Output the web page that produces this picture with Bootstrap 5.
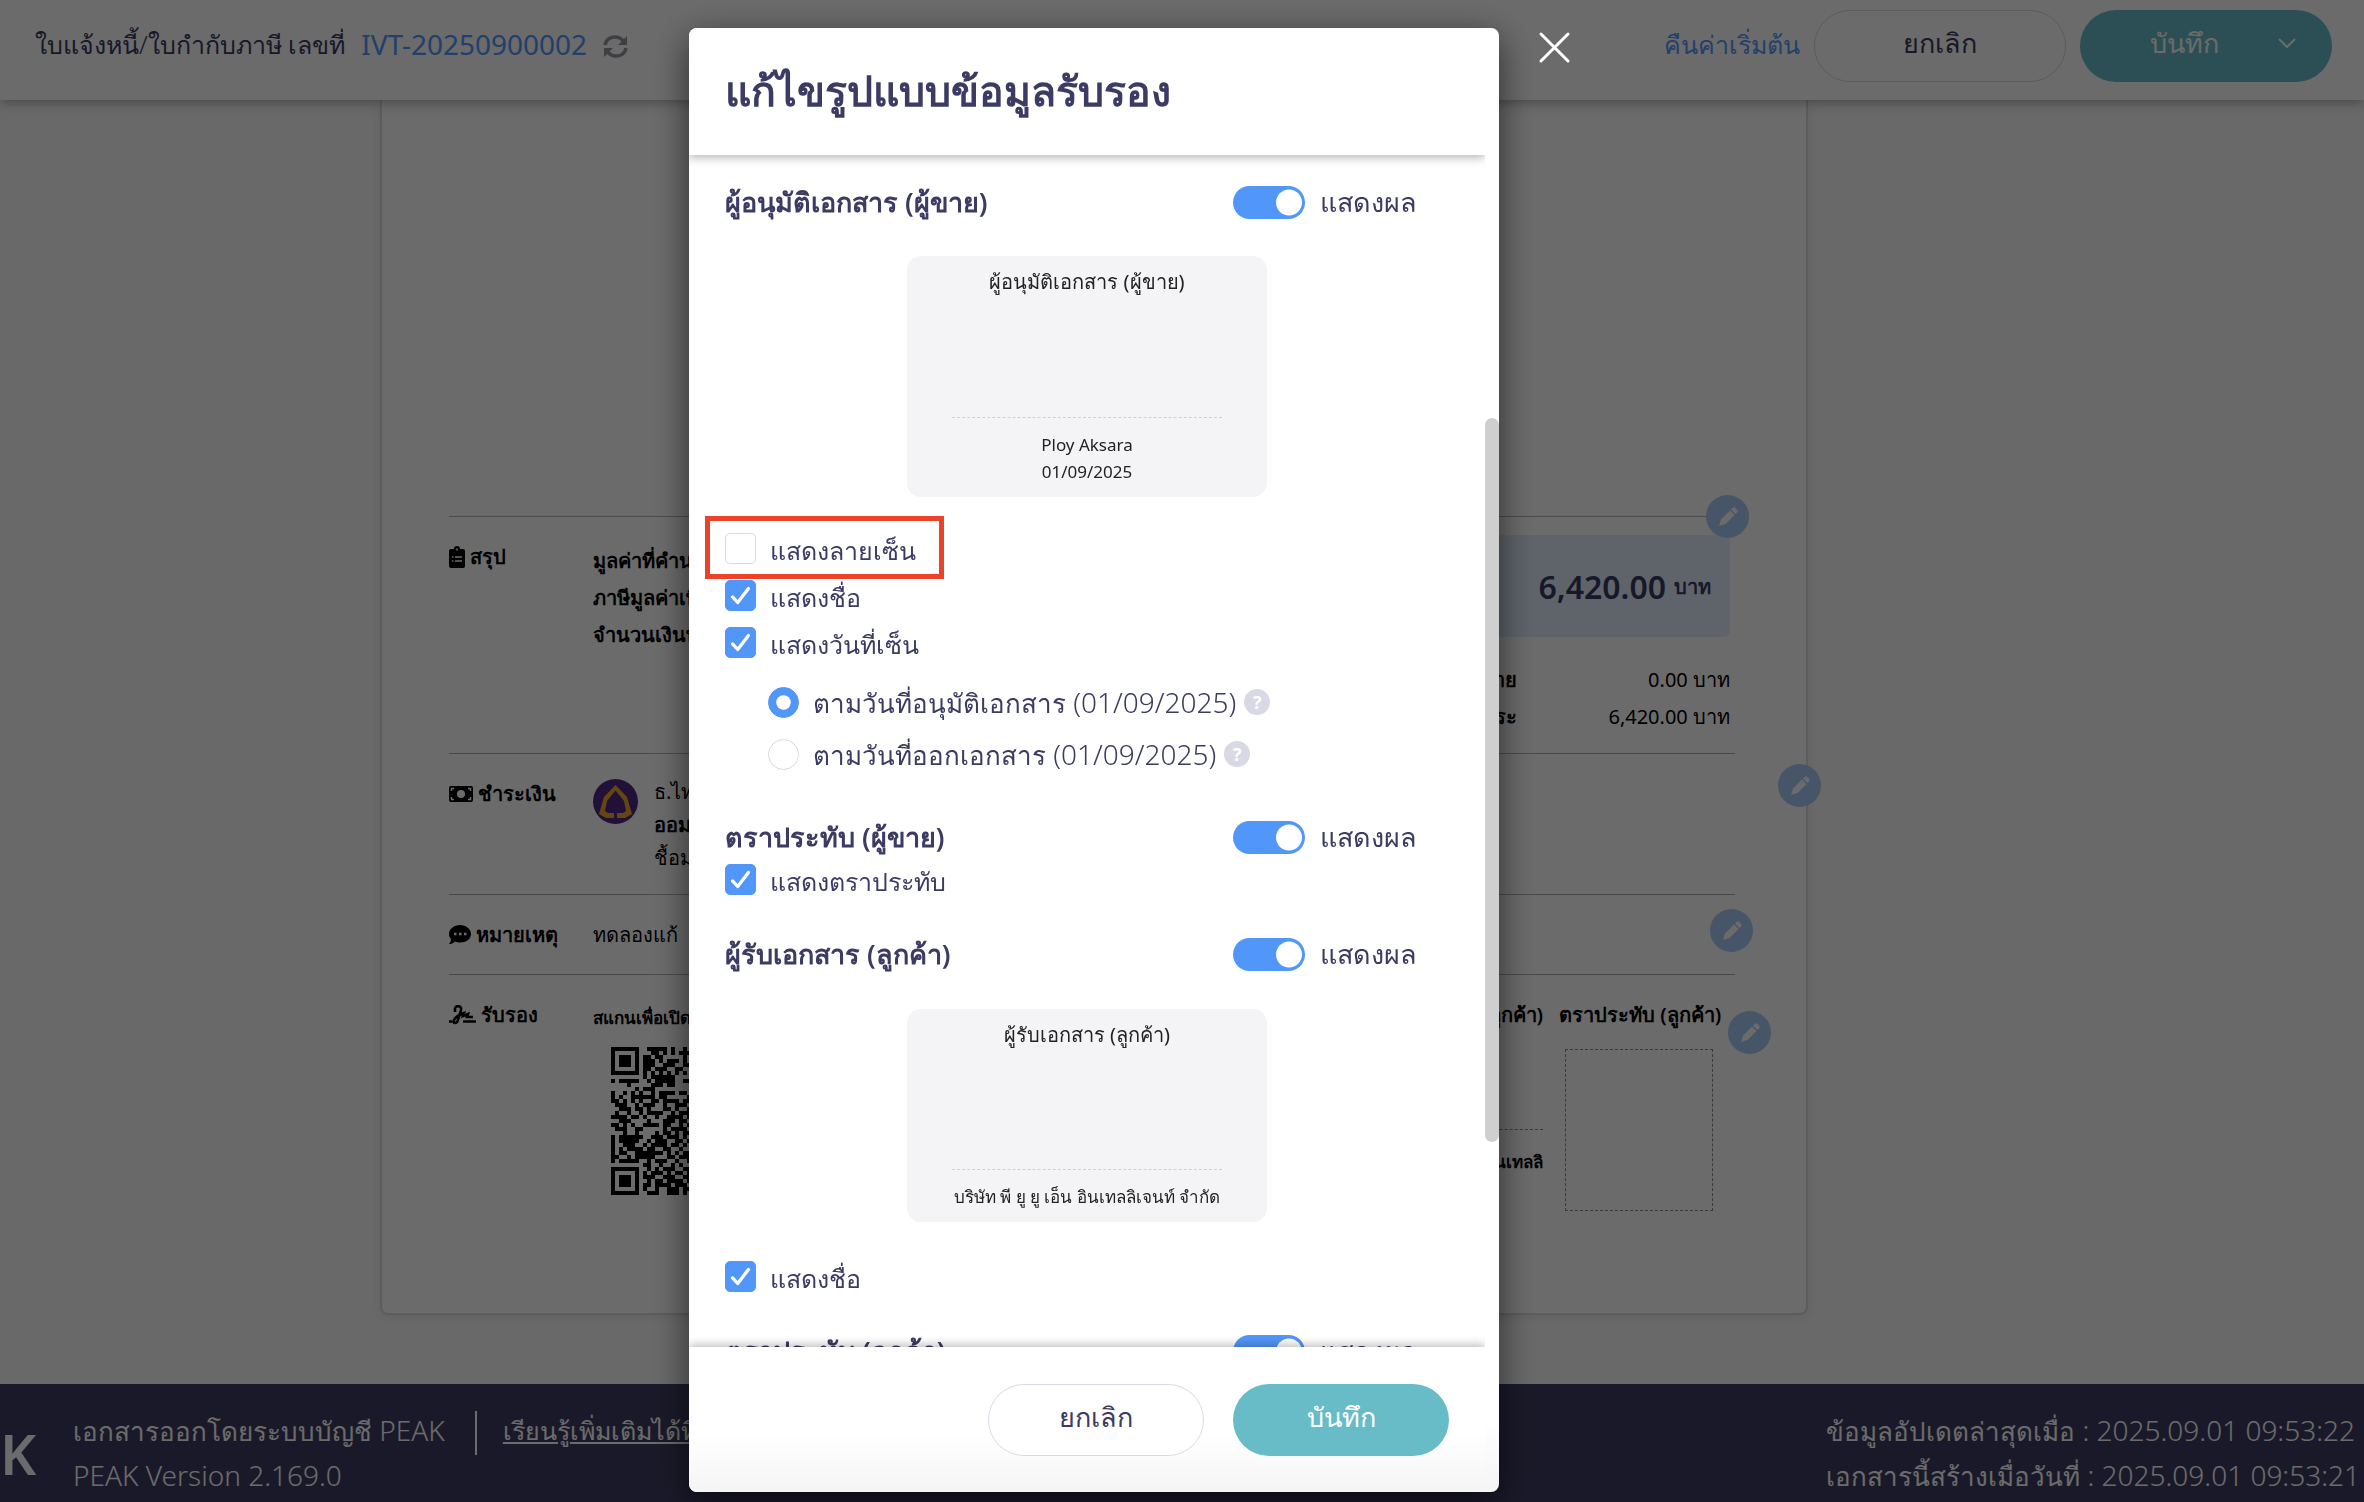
<!DOCTYPE html>
<html lang="th">
<head>
<meta charset="utf-8">
<meta name="viewport" content="width=device-width, initial-scale=1">
<title>PEAK</title>
<link href="https://cdn.jsdelivr.net/npm/bootstrap@5.3.0/dist/css/bootstrap.min.css" rel="stylesheet">
<style>
:root{--ink:#3b3b63;--blue:#5196f9;--teal:#67bcc8;--line:#d9d9e6}
body{font-family:"Noto Sans","Open Sans",sans-serif;font-size:28px;line-height:44px;color:var(--ink);background:#fafafa;height:100vh;overflow:hidden}
a{color:#5199fb;text-decoration:none}
.th{font-size:25px}
.th-l{font-size:26px}
.topbar{height:100px;padding:0 32px 8px 35px;background:#fff;box-shadow:0 2px 12px rgba(0,0,0,.35);position:relative;z-index:2;font-weight:300}
.topbar a{font-weight:400}
.top-actions{gap:14px}
.pill{height:72px;border-radius:36px;font-size:27px;font-weight:300;line-height:44px;padding:0 0 6px}
.pill-line,.pill-line:hover{border:1px solid var(--line);color:var(--ink);background:#fff}
.pill-teal,.pill-teal:hover{background:var(--teal);color:#fff;border:0}
.wide{width:252px}
.mid{width:216px}
.save-main{padding-left:10px}
.save-more{margin-right:36px}
.paper{margin-left:380px;width:1428px;padding:416px 71px 0 67px;background:#fff;border:2px solid #dcdcdc;border-top:0;border-radius:0 0 8px 8px;box-shadow:0 2px 12px rgba(0,0,0,.08);height:1215px;color:#000;font-size:20px;line-height:37px}
.band{border-top:1px solid #b4b4b4;position:relative;padding-top:21px}
.band b,.band-name{font-weight:600}
.band-name{width:144px;gap:5px;height:37px;white-space:nowrap}
.b1{height:237px}
.b2{height:141px}
.b3{height:80px}
.b4{height:300px}
.totals{margin:-3px 5px 0 auto;width:500px}
.total-box{height:102px;background:#e2eeff;border-radius:6px;padding-right:19px;color:var(--ink);font-weight:600}
.amount{font-size:32px}
.sums{margin-top:24px}
.sum-names{width:287px}
.bank-logo{margin-top:4px}
.bank-lines{line-height:33px}
.edit-dot{position:absolute;width:43px;height:43px;border-radius:50%;border:0;padding:0;background:#a9cbfa;display:flex;align-items:center;justify-content:center}
.e1{right:-14px;top:-22px}.e2{right:-86px;top:10px}.e3{right:-18px;top:14px}.e4{right:-36px;top:36px}
.scan{font-size:17px;padding-top:3px}
.scan svg{margin:11px 0 0 18px}
.sign-col{width:200px;text-align:right}
.sign-name{font-size:17px;white-space:nowrap}
.stamp-col{width:160px}
.stamp{width:148px;height:162px;border:1px dashed #8a8a8a;margin:16px auto 0}
.sign-line{border-top:1px dashed #8a8a8a;margin-top:96px;height:13px}
.foot{position:absolute;left:0;right:0;bottom:0;height:118px;padding-top:24px;background:#3f3d63;color:#fff;font-weight:300}
.foot a{color:#fff;text-decoration:underline}
.brand{width:73px;font-size:56px;font-weight:600;line-height:90px}
.bar{width:2px;height:44px;background:#fff;margin:3px 26px 0 30px}
.modal-backdrop{--bs-backdrop-opacity:.58}
.modal-dialog.sheet{max-width:810px;width:810px;height:calc(100vh - 38px);margin:28px 0 10px calc(50% - 493px)}
.sheet .modal-content{height:100%;border:0;border-radius:8px;box-shadow:0 10px 36px rgba(0,0,0,.6);color:var(--ink);background:linear-gradient(#fff 95%,#f5f5f5)}
.sheet-head{height:127px;flex:none;margin-right:14px;padding:0 0 4px 36px;box-shadow:0 3px 10px rgba(0,0,0,.28);clip-path:inset(0 0 -20px 0);position:relative;z-index:1;background:#fff;border-radius:8px 0 0 0}
.sheet-head h1{font-size:41px;font-weight:600;line-height:60px;margin:0}
.sheet-body{flex:1 1 0;min-height:0;overflow:hidden;padding:26px 50px 0 36px;font-weight:300}
.sheet-foot{height:145px;flex:none;margin-right:14px;padding:0 36px 0 0;gap:29px;box-shadow:0 -2px 10px rgba(0,0,0,.28);clip-path:inset(-20px 0 0 0);position:relative;background:linear-gradient(#fff 60%,#f5f5f5);border-radius:0 0 0 8px}
.thumb{position:absolute;right:0;top:390px;width:14px;height:724px;border-radius:7px;background:#cfcfcf}
.closer{position:absolute;left:calc(100% + 35px);top:-1px;border:0;background:none;padding:0;width:42px;height:42px}
.sec{height:42px;line-height:42px}
.sec h2{font-size:27px;font-weight:600;line-height:42px;margin:0}
.sec-toggle{width:216px;gap:15px;font-size:27px}
.gap-sec{margin-top:34px}.gap-big{margin-top:42px}
.form-check-input.tog{width:72px;height:33px;margin:0;border:0;border-radius:17px;background-color:var(--blue);background-image:url("data:image/svg+xml,%3csvg xmlns='http://www.w3.org/2000/svg' viewBox='0 0 33 33'%3e%3ccircle cx='17' cy='16.5' r='13' fill='%23fff'/%3e%3c/svg%3e");background-position:right center;background-size:33px 33px;background-repeat:no-repeat}
.opt{height:40px;line-height:40px;gap:14px}
.opt label{padding-top:4px}
.radios label{padding-top:0}
.opts{gap:7px}
.opt-lone{margin-top:1px}
.form-check-input.box{width:31px;height:31px;margin:0;border:1px solid var(--line);border-radius:5px;flex:none}
.form-check-input.dot{border-radius:50%}
.form-check-input.box:checked{background-color:var(--blue);border-color:var(--blue)}
.form-check-input.box:checked[type=checkbox]{background-image:url("data:image/svg+xml,%3csvg xmlns='http://www.w3.org/2000/svg' viewBox='0 0 31 31'%3e%3cpath d='M7 17l5.500 6L24 8' fill='none' stroke='%23fff' stroke-width='3.5' stroke-linecap='round' stroke-linejoin='round'/%3e%3c/svg%3e")}
.radios{padding-left:43px;margin-top:20px;gap:12px}
.help{width:26px;height:26px;border-radius:50%;border:0;padding:0;background:var(--line);color:#fff;font-size:18px;font-weight:700;line-height:26px;margin-left:-6px}
.pre{width:360px;border-radius:14px;background:#f4f4f7;margin:33px auto 31px;color:#222;font-size:20px;font-weight:400;line-height:26px;padding:13px 45px;text-align:center;white-space:nowrap}
.pre hr{margin:0;border:0;border-top:1px dashed #d0d0d0;opacity:1}
.pre-a{height:241px}.pre-b{height:213px;margin:34px auto}
.pre-a hr{margin-top:122px}.pre-b hr{margin-top:121px}
.pre-notes{display:flex;flex-direction:column;align-items:center;font-size:17px;line-height:27px;padding-top:13px}
.marker{position:absolute;left:16px;top:488px;width:239px;height:63px;border:5px solid #eb4329;pointer-events:none}
</style>
<script src="https://cdn.jsdelivr.net/npm/bootstrap@5.3.0/dist/js/bootstrap.bundle.min.js"></script>
</head>
<body>
<svg width="0" height="0" class="position-absolute"><symbol id="pencil" viewBox="0 0 20 20"><path d="M1 19l2-6.500L12 3.500 16.500 8 7.500 17z M13 2.500l1.500-1.500a2 2 0 0 1 2.800 0l1.700 1.700a2 2 0 0 1 0 2.800L17.500 7z" fill="#fff"/></symbol></svg>

<header class="topbar d-flex align-items-center">
  <span class="th pb-1">ใบแจ้งหนี้/ใบกำกับภาษี เลขที่</span>
  <a href="#" class="ms-3 pb-1">IVT-20250900002</a>
  <svg class="ms-3" width="25" height="23" viewBox="0 0 25 23" fill="none" stroke="#97979f" stroke-width="3.500"><path d="M2 10C3 4 8 2 12 2c4 0 7 2 9 5M23 13c-1 6-6 8-10 8-4 0-7-2-9-5"/><path d="M24 1v9h-9zM1 22v-9h9z" fill="#97979f" stroke="none"/></svg>
  <div class="top-actions ms-auto d-flex align-items-center">
    <a href="#" class="th pb-1">คืนค่าเริ่มต้น</a>
    <button class="btn pill pill-line wide" type="button">ยกเลิก</button>
    <button class="btn pill pill-teal wide d-flex align-items-center" type="button"><span class="save-main flex-grow-1">บันทึก</span><svg class="save-more" width="18" height="12" viewBox="0 0 18 12" fill="none" stroke="#fff" stroke-width="2"><path d="M1 2l8 8 8-8"/></svg></button>
  </div>
</header>

<main class="paper">
  <section class="band b1 d-flex">
    <div class="band-name d-flex align-items-center"><svg width="16" height="22" viewBox="0 0 16 22"><path d="M2 3h3a3 3 0 0 1 6 0h3a2 2 0 0 1 2 2v15a2 2 0 0 1-2 2H2a2 2 0 0 1-2-2V5a2 2 0 0 1 2-2z"/><path d="M8 2.500v2M3 11h1.500M6 11h7M3 15h1.500M6 15h7" stroke="#fff" stroke-width="1.500"/></svg>สรุป</div>
    <div class="pt-1"><b>มูลค่าที่คำนวณภาษี<br>ภาษีมูลค่าเพิ่ม<br>จำนวนเงินทั้งสิ้น</b></div>
    <div class="totals">
      <div class="total-box d-flex align-items-center justify-content-end gap-2"><span class="amount">6,420.00</span> บาท</div>
      <div class="sums d-flex"><div class="sum-names text-end"><b>หัก ณ ที่จ่าย<br>ยอดที่ชำระ</b></div><div class="ms-auto text-end">0.00 บาท<br>6,420.00 บาท</div></div>
    </div>
    <button class="edit-dot e1" type="button" aria-label="แก้ไข"><svg width="20" height="20"><use href="#pencil"/></svg></button>
  </section>
  <section class="band b2 d-flex">
    <div class="band-name d-flex align-items-center"><svg width="24" height="16" viewBox="0 0 24 16"><rect width="24" height="16" rx="2"/><circle cx="12" cy="8" r="4" fill="#fff"/><path d="M2.500 5V2.500H5M19 2.500h2.500V5M2.500 11v2.500H5M19 13.500h2.500V11" stroke="#fff" fill="none" stroke-width="1.500"/></svg>ชำระเงิน</div>
    <svg class="bank-logo" width="45" height="45" viewBox="0 0 45 45"><circle cx="22.500" cy="22.500" r="22.500" fill="#4f2a86"/><path fill-rule="evenodd" d="M22.500 6L34 18l5 17-7 4h-8v-5h6l3-2-2-10-8.500-10.500L14 22l-2 10 3 2h6v5h-8l-7-4 5-17z" fill="#eea629"/></svg>
    <div class="bank-lines ps-3">ธ.ไทยพาณิชย์<br><b>ออมทรัพย์</b><br>ชื้อมา</div>
    <button class="edit-dot e2" type="button" aria-label="แก้ไข"><svg width="20" height="20"><use href="#pencil"/></svg></button>
  </section>
  <section class="band b3 d-flex">
    <div class="band-name d-flex align-items-center"><svg width="22" height="20" viewBox="0 0 22 20"><path d="M11 0c6 0 11 4 11 9s-5 8.500-11 8.500c-2 0-3-.3-5-1C4 18.500 2 19 0 19c1.500-2 2-3 2-5C.7 12.500 0 11 0 9 0 4 5 0 11 0z"/><path d="M5 9h2.500M10 9h2.500M15 9h2.500" stroke="#fff" stroke-width="2.500"/></svg>หมายเหตุ</div>
    <div>ทดลองแก้</div>
    <button class="edit-dot e3" type="button" aria-label="แก้ไข"><svg width="20" height="20"><use href="#pencil"/></svg></button>
  </section>
  <section class="band b4 d-flex">
    <div class="band-name d-flex align-items-center"><svg width="27" height="20" viewBox="0 0 27 20" fill="none" stroke="#000" stroke-width="2.600"><path d="M6 7V4c0-4 7-4 6 1L9 15c-1 4-6 4-4 0 2-4 7-6 10-7l-1 3 5-2-1 3h6M0 16.500h3M14 16.500h13"/></svg>รับรอง</div>
    <div class="scan"><b>สแกนเพื่อเปิดด้วย</b><svg class="d-block" width="148" height="148" viewBox="0 0 37 37" shape-rendering="crispEdges"><path id="qrp" d=""/></svg></div>
    <div class="ms-auto d-flex gap-3 me-3">
      <div class="sign-col"><b>ผู้รับเอกสาร (ลูกค้า)</b><div class="sign-line"></div><b class="sign-name">พี ยู ยู เอ็น อินเทลลิ</b></div>
      <div class="stamp-col text-nowrap"><b>ตราประทับ (ลูกค้า)</b><div class="stamp"></div></div>
    </div>
    <button class="edit-dot e4" type="button" aria-label="แก้ไข"><svg width="20" height="20"><use href="#pencil"/></svg></button>
  </section>
</main>

<footer class="foot d-flex">
  <div class="brand">K</div>
  <div class="text-nowrap"><span class="th-l">เอกสารออกโดยระบบบัญชี</span> PEAK<br>PEAK Version 2.169.0</div>
  <div class="bar"></div>
  <a href="#" class="th">เรียนรู้เพิ่มเติมได้ที่นี่</a>
  <div class="ms-auto pe-1 text-nowrap"><span class="th-l">ข้อมูลอัปเดตล่าสุดเมื่อ</span> : 2025.09.01 09:53:22<br><span class="th-l">เอกสารนี้สร้างเมื่อวันที่</span> : 2025.09.01 09:53:21</div>
</footer>

<div class="modal-backdrop show"></div>
<div class="modal d-block overflow-hidden" tabindex="-1" role="dialog" aria-labelledby="ttl">
 <div class="modal-dialog sheet">
  <div class="modal-content">
    <div class="sheet-head d-flex align-items-center"><h1 id="ttl">แก้ไขรูปแบบข้อมูลรับรอง</h1></div>
    <div class="sheet-body">
      <div class="sec d-flex justify-content-between"><h2>ผู้อนุมัติเอกสาร (ผู้ขาย)</h2><div class="sec-toggle d-flex align-items-center"><input class="form-check-input tog" type="checkbox" role="switch" id="t1" checked><label for="t1">แสดงผล</label></div></div>
      <div class="pre pre-a"><div>ผู้อนุมัติเอกสาร (ผู้ขาย)</div><hr><div class="pre-notes"><span>Ploy Aksara</span><span>01/09/2025</span></div></div>
      <div class="opts th d-flex flex-column">
        <div class="opt d-flex align-items-center"><input class="form-check-input box" type="checkbox" id="c1"><label for="c1">แสดงลายเซ็น</label></div>
        <div class="opt d-flex align-items-center"><input class="form-check-input box" type="checkbox" id="c2" checked><label for="c2">แสดงชื่อ</label></div>
        <div class="opt d-flex align-items-center"><input class="form-check-input box" type="checkbox" id="c3" checked><label for="c3">แสดงวันที่เซ็น</label></div>
      </div>
      <div class="radios d-flex flex-column">
        <div class="opt d-flex align-items-center"><input class="form-check-input box dot" type="radio" name="d" id="r1" checked><label for="r1"><span class="th-l">ตามวันที่อนุมัติเอกสาร</span> (01/09/2025)</label><button class="help" type="button">?</button></div>
        <div class="opt d-flex align-items-center"><input class="form-check-input box dot" type="radio" name="d" id="r2"><label for="r2"><span class="th-l">ตามวันที่ออกเอกสาร</span> (01/09/2025)</label><button class="help" type="button">?</button></div>
      </div>
      <div class="sec gap-big d-flex justify-content-between"><h2>ตราประทับ (ผู้ขาย)</h2><div class="sec-toggle d-flex align-items-center"><input class="form-check-input tog" type="checkbox" role="switch" id="t2" checked><label for="t2">แสดงผล</label></div></div>
      <div class="opt opt-lone th d-flex align-items-center"><input class="form-check-input box" type="checkbox" id="c4" checked><label for="c4">แสดงตราประทับ</label></div>
      <div class="sec gap-sec d-flex justify-content-between"><h2>ผู้รับเอกสาร (ลูกค้า)</h2><div class="sec-toggle d-flex align-items-center"><input class="form-check-input tog" type="checkbox" role="switch" id="t3" checked><label for="t3">แสดงผล</label></div></div>
      <div class="pre pre-b"><div>ผู้รับเอกสาร (ลูกค้า)</div><hr><div class="pre-notes">บริษัท พี ยู ยู เอ็น อินเทลลิเจนท์ จำกัด</div></div>
      <div class="opt opt-lone th d-flex align-items-center"><input class="form-check-input box" type="checkbox" id="c5" checked><label for="c5">แสดงชื่อ</label></div>
      <div class="sec gap-sec d-flex justify-content-between"><h2>ตราประทับ (ลูกค้า)</h2><div class="sec-toggle d-flex align-items-center"><input class="form-check-input tog" type="checkbox" role="switch" id="t4" checked><label for="t4">แสดงผล</label></div></div>
    </div>
    <div class="sheet-foot d-flex align-items-center justify-content-end">
      <button class="btn pill pill-line mid" type="button">ยกเลิก</button>
      <button class="btn pill pill-teal mid" type="button">บันทึก</button>
    </div>
    <div class="thumb"></div>
    <div class="marker"></div>
    <button class="closer" type="button" aria-label="ปิด"><svg class="d-block" width="42" height="42" viewBox="0 0 42 42" stroke="#fff" stroke-width="3" stroke-linecap="round"><path d="M7 7l27 27M34 7L7 34"/></svg></button>
  </div>
 </div>
</div>
<script>
// visible modules of the verification code, one string per row
const rows=["11111110011111010010","10000010001101010111","10111010110110000010","10111010111010111010","10111010111001110011","10000010110111001100","11111110101010101010","00000000101111110000","10111110010111110011","00001000001110110000","00000010111000000000","10010101001011110110","10100111111011000001","11010101001101111011","01110010111001001110","00111011010001101001","01001001011110010111","11110110100100111101","00111000010001110110","11010100111101100101","01110011000001011110","00010010000101101011","10111111001110111010","10111110010111001101","10011100101111011010","10101111011001100100","10110011111110101011","11001011111000110111","10111110010111001001","00000000110010010100","11111110010101110011","10000010101110101101","10111010111001110011","10111010010110111101","10111010110111101110","10000010100100111011","11111110011100111010"];
let d="";rows.forEach((r,y)=>[...r].forEach((c,x)=>{if(c==="1")d+=`M${x} ${y}h1v1h-1z`}));
document.getElementById("qrp").setAttribute("d",d);
</script>
</body>
</html>
